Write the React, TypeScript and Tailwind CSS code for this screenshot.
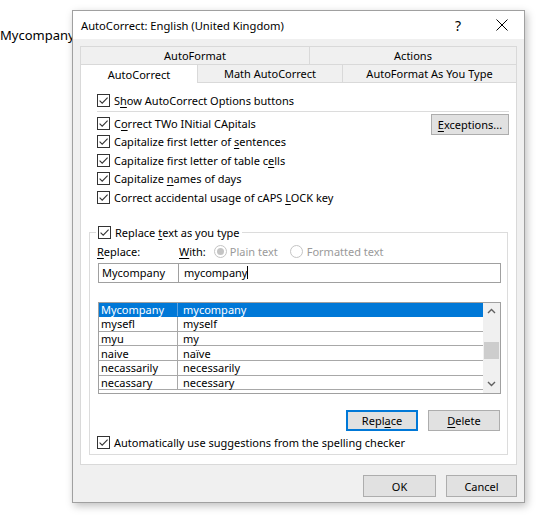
import React from "react";

function U({ children }: { children: React.ReactNode }) {
  return <span className="underline underline-offset-[2px] decoration-[1px]">{children}</span>;
}

function Check() {
  return (
    <span className="w-[13px] h-[13px] border border-[#333333] bg-white flex items-center justify-center shrink-0">
      <svg width="11" height="11" viewBox="0 0 11 11">
        <path d="M1.6 5.6 L4.2 8.2 L9.6 2.6" fill="none" stroke="#333333" strokeWidth="1.1" />
      </svg>
    </span>
  );
}

function CheckRow({ children, h = "h-[18.5px]" }: { children: React.ReactNode; h?: string }) {
  return (
    <div className={`flex items-center gap-[4px] ${h} whitespace-nowrap`}>
      <Check />
      <span>{children}</span>
    </div>
  );
}

function Radio({ checked }: { checked?: boolean }) {
  return (
    <span className="w-[13px] h-[13px] rounded-full border border-[#c4c4c4] bg-white flex items-center justify-center shrink-0">
      {checked ? <span className="w-[7px] h-[7px] rounded-full bg-[#c4c4c4]" /> : null}
    </span>
  );
}

const rows: [string, string][] = [
  ["Mycompany", "mycompany"],
  ["mysefl", "myself"],
  ["myu", "my"],
  ["naive", "naïve"],
  ["necassarily", "necessarily"],
  ["necassary", "necessary"],
];

function Btn({ children, w, h, def }: { children: React.ReactNode; w: string; h: string; def?: boolean }) {
  return (
    <div
      className={`${w} ${h} flex items-center justify-center bg-[#e1e1e1] ${
        def ? "border-2 border-[#0078d7]" : "border border-[#adadad]"
      }`}
    >
      {children}
    </div>
  );
}

export default function App() {
  return (
    <div className="w-[540px] h-[520px] bg-white flex items-start font-['Noto_Sans',sans-serif] text-black overflow-hidden">
      <div className="w-[72px] shrink-0 pt-[26px] text-[13px] leading-[18px] whitespace-nowrap">Mycompany</div>
      <div className="mt-[10px] w-[453px] h-[493px] shrink-0 border border-[#a0a0a0] bg-[#f0f0f0] shadow-[2px_3px_8px_rgba(0,0,0,0.25)] flex flex-col text-[11px] leading-[15px]">
        {/* Title bar */}
        <div className="h-[28px] bg-white flex items-center pl-[8px] text-[11.2px]">
          <span className="whitespace-nowrap">AutoCorrect: English (United Kingdom)</span>
          <div className="ml-auto flex h-full">
            <div className="w-[44px] h-full flex items-center justify-center text-[14px]">?</div>
            <div className="w-[44px] h-full flex items-center justify-center">
              <svg width="12" height="12" viewBox="0 0 12 12">
                <path d="M0.5 0.5 L11.5 11.5 M11.5 0.5 L0.5 11.5" stroke="#000" strokeWidth="1" fill="none" />
              </svg>
            </div>
          </div>
        </div>
        {/* Body */}
        <div className="flex-1 flex flex-col px-[7px] pt-[7px]">
          {/* Tabs row 1 */}
          <div className="flex h-[18px]">
            <div className="w-[229px] border-t border-l border-[#d9d9d9] bg-[#f0f0f0] flex items-center justify-center">AutoFormat</div>
            <div className="flex-1 border-t border-l border-r border-[#d9d9d9] bg-[#f0f0f0] flex items-center justify-center">Actions</div>
          </div>
          {/* Tabs row 2 */}
          <div className="flex h-[19px]">
            <div className="w-[117px] border-t border-l border-[#d9d9d9] bg-white flex items-center justify-center">AutoCorrect</div>
            <div className="w-[145px] border-t border-l border-b border-[#d9d9d9] bg-[#f0f0f0] flex items-center justify-center">Math AutoCorrect</div>
            <div className="flex-1 border-t border-l border-r border-b border-[#d9d9d9] bg-[#f0f0f0] flex items-center justify-center">AutoFormat As You Type</div>
          </div>
          {/* Panel */}
          <div className="h-[382px] bg-white border-l border-r border-b border-[#d9d9d9] flex flex-col px-[8px] pt-[8px]">
            <div className="pl-[8px]">
              <CheckRow h="h-[18px]">
                S<U>h</U>ow AutoCorrect Options buttons
              </CheckRow>
            </div>
            <div className="ml-[8px] mr-[-1px] mt-[2px] h-px bg-[#dcdcdc]" />
            <div className="flex pl-[8px] pt-[2px]">
              <div className="flex flex-col">
                <CheckRow>
                  C<U>o</U>rrect TWo INitial CApitals
                </CheckRow>
                <CheckRow>
                  Capitalize first letter of <U>s</U>entences
                </CheckRow>
                <CheckRow>
                  Capitalize first letter of table c<U>e</U>lls
                </CheckRow>
                <CheckRow>
                  Capitalize <U>n</U>ames of days
                </CheckRow>
                <CheckRow>
                  Correct accidental usage of cAPS <U>L</U>OCK key
                </CheckRow>
              </div>
              <div className="ml-auto mt-[0px] mr-[-1px]">
                <Btn w="w-[78px]" h="h-[21px]">
                  <U>E</U>xceptions...
                </Btn>
              </div>
            </div>
            {/* Group box */}
            <div className="relative mt-[25px] h-[223px] border border-[#dcdcdc] flex flex-col pl-[7px] pr-[6px] pt-[11px]">
              <div className="absolute left-[6px] top-[-9px] bg-white px-[2px]">
                <CheckRow h="h-[18px]">
                  Replace <U>t</U>ext as you type
                </CheckRow>
              </div>
              <div className="flex h-[16px] items-center whitespace-nowrap">
                <span className="w-[82px]">
                  <U>R</U>eplace:
                </span>
                <span>
                  <U>W</U>ith:
                </span>
                <span className="ml-[8px] flex items-center gap-[3px] text-[#9a9a9a]">
                  <Radio checked />
                  Plain text
                </span>
                <span className="ml-[12px] flex items-center gap-[4px] text-[#9a9a9a]">
                  <Radio />
                  Formatted text
                </span>
              </div>
              <div className="flex mt-[3px] h-[20px] pl-[1px]">
                <div className="w-[81px] h-full border border-[#a0a0a0] flex items-center pl-[3px]">Mycompany</div>
                <div className="flex-1 ml-[-1px] h-full border border-[#a0a0a0] flex items-center pl-[5px]">
                  mycompany
                  <span className="w-px h-[13px] bg-black" />
                </div>
              </div>
              <div className="mt-[19px] ml-[1px] h-[92px] border border-[#a0a0a0] flex">
                <div className="flex-1 flex flex-col">
                  {rows.map(([a, b], i) => (
                    <div
                      key={a}
                      className={`flex h-[14.67px] border-b ${
                        i === 0 ? "bg-[#0078d7] text-white border-[#0078d7]" : "border-[#a8a8a8]"
                      }`}
                    >
                      <div className={`w-[79px] flex items-center pl-[2px] border-r ${i === 0 ? "border-[#5fa3e0]" : "border-[#a8a8a8]"}`}>
                        {a}
                      </div>
                      <div className="flex-1 flex items-center pl-[5px]">{b}</div>
                    </div>
                  ))}
                </div>
                <div className="w-[17px] bg-[#f0f0f0] flex flex-col items-center">
                  <div className="h-[17px] flex items-center justify-center">
                    <svg width="9" height="6" viewBox="0 0 9 6">
                      <path d="M1 5 L4.5 1.5 L8 5" stroke="#606060" strokeWidth="1.4" fill="none" />
                    </svg>
                  </div>
                  <div className="mt-[22px] w-[15px] h-[17px] bg-[#cdcdcd]" />
                  <div className="mt-auto h-[17px] flex items-center justify-center">
                    <svg width="9" height="6" viewBox="0 0 9 6">
                      <path d="M1 1 L4.5 4.5 L8 1" stroke="#606060" strokeWidth="1.4" fill="none" />
                    </svg>
                  </div>
                </div>
              </div>
              <div className="mt-[16px] flex justify-end gap-[10px] pr-[1px]">
                <Btn w="w-[72px]" h="h-[21px]" def>
                  Repl<U>a</U>ce
                </Btn>
                <Btn w="w-[72px]" h="h-[21px]">
                  <U>D</U>elete
                </Btn>
              </div>
              <div className="mt-[3px]">
                <CheckRow h="h-[18px]">Automatically use suggestions from the spelling checker</CheckRow>
              </div>
            </div>
          </div>
          {/* Bottom buttons */}
          <div className="flex justify-end gap-[10px] pt-[10px]">
            <Btn w="w-[73px]" h="h-[22px]">OK</Btn>
            <Btn w="w-[71px]" h="h-[22px]">Cancel</Btn>
          </div>
        </div>
      </div>
    </div>
  );
}
